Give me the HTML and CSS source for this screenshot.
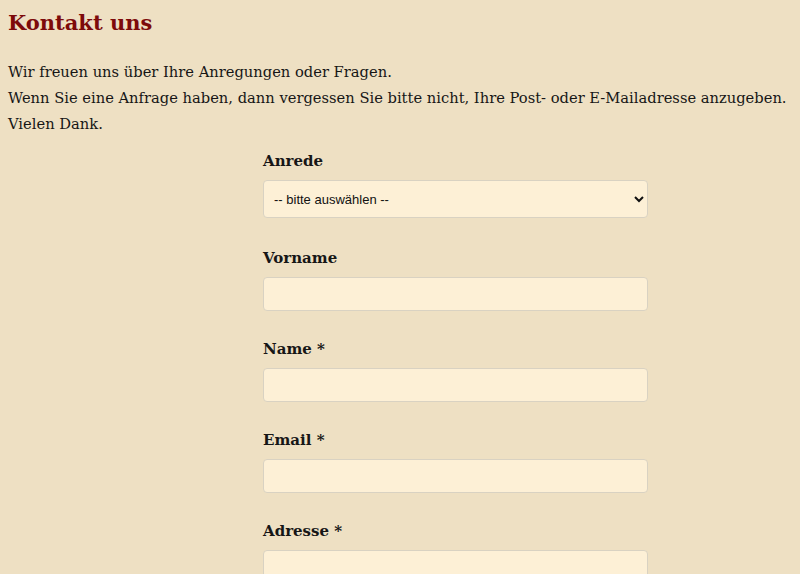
FILE: index.html
```html
<!DOCTYPE html>
<html lang="de">
<head>
<meta charset="utf-8">
<title>Kontakt uns</title>
<link rel="stylesheet" href="styles.css">
</head>
<body>
<h1 class="title">Kontakt uns</h1>
<p class="intro">Wir freuen uns über Ihre Anregungen oder Fragen.<br>Wenn Sie eine Anfrage haben, dann vergessen Sie bitte nicht, Ihre Post- oder E-Mailadresse anzugeben.<br>Vielen Dank.</p>
<form class="form">
  <div class="field">
    <label class="label" for="anrede">Anrede</label>
    <select class="select" id="anrede">
      <option>-- bitte auswählen --</option>
      <option>Frau</option>
      <option>Herr</option>
    </select>
  </div>
  <div class="field">
    <label class="label" for="vorname">Vorname</label>
    <input class="input" id="vorname" type="text">
  </div>
  <div class="field">
    <label class="label" for="name">Name *</label>
    <input class="input" id="name" type="text">
  </div>
  <div class="field">
    <label class="label" for="email">Email *</label>
    <input class="input" id="email" type="email">
  </div>
  <div class="field">
    <label class="label" for="adresse">Adresse *</label>
    <input class="input" id="adresse" type="text">
  </div>
</form>
</body>
</html>
```
FILE: styles.css
```css
html, body {
  background: #eee0c3;
}
body {
  margin: 0;
  padding: 0 8px;
  font-family: "DejaVu Serif", "Liberation Serif", serif;
  color: #161616;
  font-size: 14.7px;
}
.title {
  margin: 0;
  padding-top: 8px;
  font-size: 21px;
  line-height: 30px;
  font-weight: bold;
  color: #7d0a0a;
}
.intro {
  margin: 21px 0 0;
  line-height: 26px;
}
.form {
  width: 385px;
  margin-left: 255px;
  display: flex;
  flex-direction: column;
  gap: 27px;
  margin-top: 13px;
}
.field {
  display: flex;
  flex-direction: column;
}
.label {
  font-weight: bold;
  font-size: 15px;
  line-height: 22px;
  margin-bottom: 8px;
}
.select, .input {
  box-sizing: border-box;
  width: 385px;
  background: #fdf0d6;
  border: 1px solid #d9d2c2;
  border-radius: 4px;
  font-family: "Liberation Sans", Arial, sans-serif;
  font-size: 13px;
  color: #111;
  outline: none;
}
.select {
  height: 38px;
  padding: 0 6px;
  margin-bottom: 2px;
}
.input {
  height: 34px;
  padding: 0 8px;
}
```
